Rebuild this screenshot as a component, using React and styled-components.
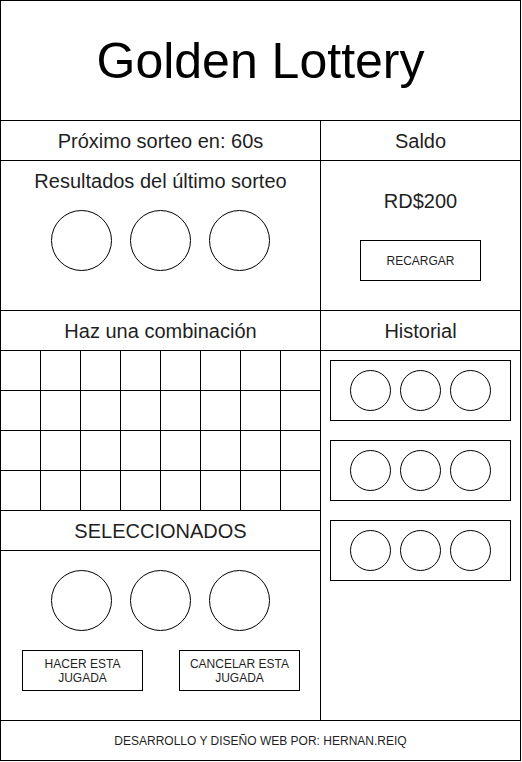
import styled, { createGlobalStyle } from "styled-components";

const GlobalStyle = createGlobalStyle`
  *, *::before, *::after {
    box-sizing: border-box;
  }
  body {
    margin: 0;
    background: #ffffff;
    font-family: "Liberation Sans", Arial, sans-serif;
    color: #1f1f1f;
  }
`;

const Frame = styled.div`
  width: 521px;
  height: 761px;
  border: 1px solid #000;
  display: flex;
  flex-direction: column;
  background: #fff;
`;

const TitleBar = styled.header`
  height: 120px;
  border-bottom: 1px solid #000;
  display: flex;
  align-items: center;
  justify-content: center;
  h1 {
    margin: 0;
    font-weight: 400;
    font-size: 50px;
    line-height: 56px;
    color: #000;
  }
`;

const Body = styled.main`
  flex: 1 1 auto;
  display: grid;
  grid-template-columns: 320px 1fr;
  min-height: 0;
`;

const Column = styled.section`
  display: flex;
  flex-direction: column;
  border-right: ${(p) => (p.$divider ? "1px solid #000" : "none")};
`;

const SectionHeader = styled.div`
  height: 40px;
  flex: 0 0 40px;
  border-bottom: 1px solid #000;
  display: flex;
  align-items: center;
  justify-content: center;
  padding-top: 1px;
  font-size: 20px;
  line-height: 23px;
`;

const Panel = styled.div`
  height: 150px;
  flex: 0 0 150px;
  border-bottom: 1px solid #000;
  display: flex;
  flex-direction: column;
  align-items: center;
  padding-top: ${(p) => p.$top}px;
  .label {
    font-size: 20px;
    line-height: 23px;
  }
`;

const BallRow = styled.div`
  display: flex;
  justify-content: center;
  gap: ${(p) => p.$gap}px;
  margin-top: ${(p) => p.$offset || 0}px;
`;

const Ball = styled.div`
  width: ${(p) => p.$size}px;
  height: ${(p) => p.$size}px;
  border: 1px solid #000;
  border-radius: 50%;
`;

const OutlineButton = styled.button`
  width: 121px;
  height: 41px;
  border: 1px solid #000;
  border-radius: 0;
  background: #fff;
  padding: 0 6px;
  margin-top: ${(p) => p.$offset || 0}px;
  font-family: "Liberation Sans", Arial, sans-serif;
  font-size: 12px;
  line-height: 14px;
  color: #1f1f1f;
  cursor: pointer;
`;

const NumberGrid = styled.div`
  display: grid;
  grid-template-columns: repeat(7, 40px) 1fr;
  grid-auto-rows: 40px;
`;

const Cell = styled.div`
  border-bottom: 1px solid #000;
  border-right: ${(p) => (p.$last ? "none" : "1px solid #000")};
`;

const SelectedBody = styled.div`
  flex: 1 1 auto;
  padding-top: 19px;
`;

const ButtonRow = styled.div`
  display: flex;
  gap: 36px;
  padding-left: 21px;
  margin-top: 19px;
`;

const HistoryList = styled.div`
  display: flex;
  flex-direction: column;
  gap: 19px;
  padding: 9px 9px 0;
`;

const HistoryCard = styled.div`
  height: 61px;
  border: 1px solid #000;
  display: flex;
  align-items: center;
  justify-content: center;
  gap: 9px;
`;

const Footer = styled.footer`
  height: 40px;
  border-top: 1px solid #000;
  display: flex;
  align-items: center;
  justify-content: center;
  font-size: 12px;
  line-height: 14px;
`;

function Balls({ size, gap, offset }) {
  return (
    <BallRow $gap={gap} $offset={offset}>
      {[0, 1, 2].map((i) => (
        <Ball key={i} $size={size} />
      ))}
    </BallRow>
  );
}

export default function App() {
  const cells = Array.from({ length: 32 });
  const history = [0, 1, 2];

  return (
    <>
      <GlobalStyle />
      <Frame>
        <TitleBar>
          <h1>Golden Lottery</h1>
        </TitleBar>
        <Body>
          <Column $divider>
            <SectionHeader>Próximo sorteo en: 60s</SectionHeader>
            <Panel $top={9}>
              <div className="label">Resultados del último sorteo</div>
              <Balls size={61} gap={18} offset={17} />
            </Panel>
            <SectionHeader>Haz una combinación</SectionHeader>
            <NumberGrid>
              {cells.map((_, i) => (
                <Cell key={i} $last={i % 8 === 7} />
              ))}
            </NumberGrid>
            <SectionHeader>SELECCIONADOS</SectionHeader>
            <SelectedBody>
              <Balls size={61} gap={18} />
              <ButtonRow>
                <OutlineButton>HACER ESTA JUGADA</OutlineButton>
                <OutlineButton>CANCELAR ESTA JUGADA</OutlineButton>
              </ButtonRow>
            </SelectedBody>
          </Column>
          <Column>
            <SectionHeader>Saldo</SectionHeader>
            <Panel $top={29}>
              <div className="label">RD$200</div>
              <OutlineButton $offset={27}>RECARGAR</OutlineButton>
            </Panel>
            <SectionHeader>Historial</SectionHeader>
            <HistoryList>
              {history.map((h) => (
                <HistoryCard key={h}>
                  {[0, 1, 2].map((i) => (
                    <Ball key={i} $size={41} />
                  ))}
                </HistoryCard>
              ))}
            </HistoryList>
          </Column>
        </Body>
        <Footer>DESARROLLO Y DISEÑO WEB POR: HERNAN.REIQ</Footer>
      </Frame>
    </>
  );
}
